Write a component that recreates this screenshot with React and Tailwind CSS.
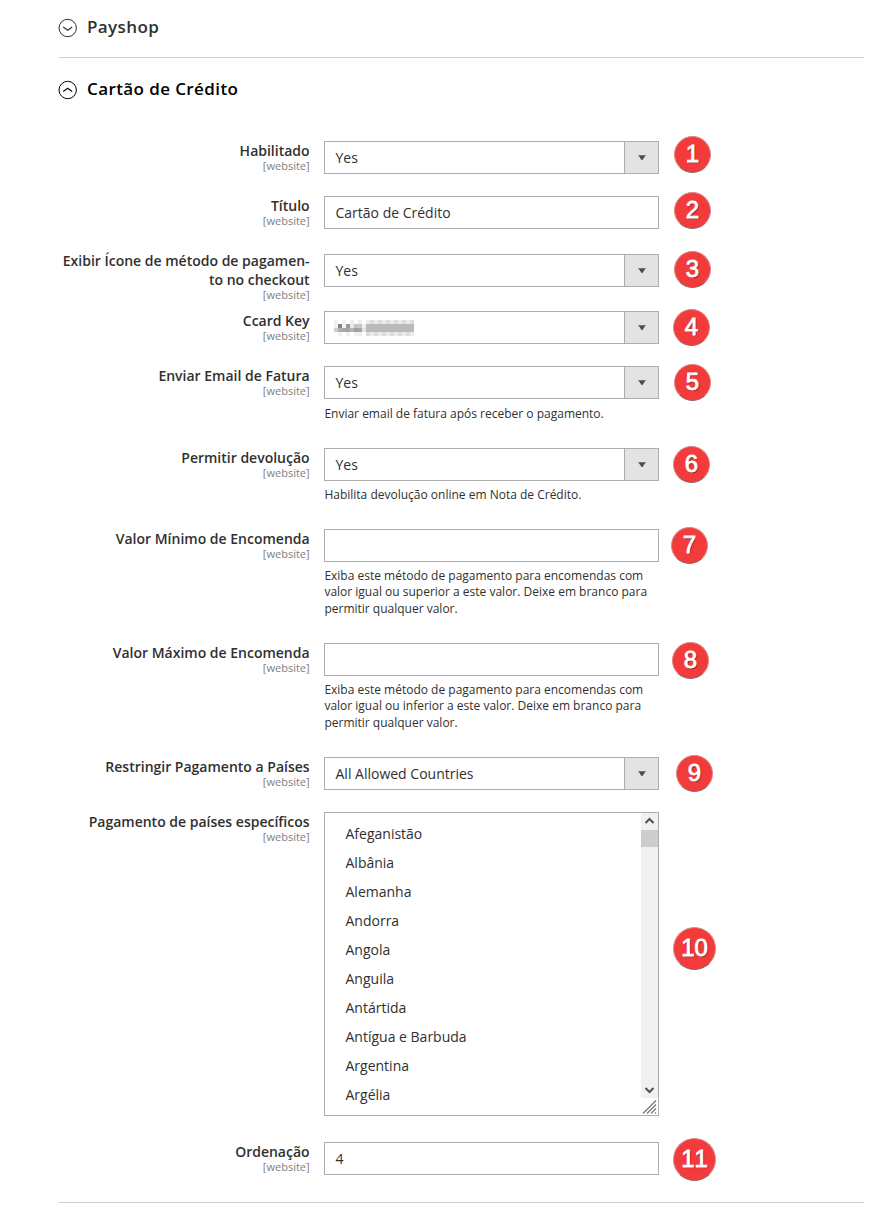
const COUNTRIES = ["Afeganistão", "Albânia", "Alemanha", "Andorra", "Angola", "Anguila", "Antártida", "Antígua e Barbuda", "Argentina", "Argélia"];

const MASK = [
  ["#f5efe8", "#fff", "#f0f0f0", "#fff", "#f5ede4", "#fff", "#e8f0f4", "#fff"],
  ["#f5f2ec", "#838387", "#f4f4f6", "#ab9584", "#e4eaf0", "#c9c4b8", "#c3c9d0", "#f1f1f4"],
  ["#d8ccc2", "#b0adab", "#a5a5a5", "#9da9b1", "#b5b5b5", "#9ba0a6", "#a7a7a7", "#e4e4e8"],
  ["#fff", "#f1f1f1", "#fff", "#f0f0f4", "#fff", "#f1f1f1", "#f0f0f0", "#fff"],
];

function maskColor(row, col) {
  if (col < 8) return MASK[row][col];
  if (row === 1 || row === 2) return "#bababa";
  return (col + (row === 3 ? 1 : 0)) % 2 ? "#dadde6" : "#efede8";
}

function MaskedValue() {
  return (
    <div className="-ml-[1.5px] grid grid-cols-[repeat(20,4px)] grid-rows-[repeat(4,4px)]">
      {[0, 1, 2, 3].map((r) =>
        Array.from({ length: 20 }, (_, c) => <span key={`${r}-${c}`} style={{ backgroundColor: maskColor(r, c) }} />)
      )}
    </div>
  );
}

function Field({ children, select }) {
  return (
    <div className="flex h-[33px] w-[335px] border border-[#adadad] bg-white text-sm text-[#303030]">
      <div className="flex flex-1 items-center pl-[10.5px]">{children}</div>
      {select && (
        <div className="flex w-[34px] items-center justify-center border-l border-[#adadad] bg-[#e3e3e3]">
          <svg width="8" height="5" viewBox="0 0 8 5">
            <path d="M0 0h8v1H0z" fill="#a5a29f" />
            <path d="M.500 .500h7L4.500 5h-1z" fill="#514943" />
          </svg>
        </div>
      )}
    </div>
  );
}

function CountryList() {
  return (
    <div className="flex h-[304px] w-[335px] border border-[#adadad] bg-white text-sm text-[#303030]">
      <ul className="flex-1 pt-[6px] pl-[20.5px]">
        {COUNTRIES.map((c) => <li key={c} className="flex h-[29px] items-center">{c}</li>)}
      </ul>
      <div className="flex w-[17px] flex-col">
        <div className="flex flex-1 flex-col items-center bg-[#f0f0f0]">
          <svg width="17" height="17" viewBox="0 0 17 17"><path d="M4.500 10 8.500 6l4 4" fill="none" stroke="#505050" strokeWidth="2" /></svg>
          <div className="h-[17px] w-full bg-[#cdcdcd]" />
          <div className="flex-1" />
          <svg width="17" height="17" viewBox="0 0 17 17"><path d="M4.500 7l4 4 4-4" fill="none" stroke="#505050" strokeWidth="2" /></svg>
        </div>
        <svg width="17" height="17" viewBox="0 0 17 17"><path d="M2 15.500 15 2.500M6 15.500l9-9M10 15.500l5-5M14 15.500l1-1" stroke="#777" strokeWidth="1.200" /></svg>
      </div>
    </div>
  );
}

function Badge({ n, place }) {
  return (
    <span className={`${place} ${n > 9 ? "size-[43px]" : "size-[37px]"} flex shrink-0 items-center justify-center rounded-full border border-[#d98a8a] border-b-[#8a6a6a] bg-[#f43b3b] pb-0.5 font-['Liberation_Sans',sans-serif] text-2xl leading-none text-white [-webkit-text-stroke:0.8px_white] [font-kerning:none] [text-shadow:1px_1px_1px_#00000080]`}>
      {n}
    </span>
  );
}

function Row({ n, label, height, place, drop, note, noteGap = "mt-[6px]", children }) {
  return (
    <div className={`flex items-start ${height}`}>
      <div className="w-[251px] shrink-0 pr-[0.4px] text-right">
        <div className="text-sm leading-[19px] font-semibold whitespace-nowrap text-[#303030]">{label}</div>
        <div className="text-[11px] leading-[11px] text-[#808080]">[website]</div>
      </div>
      <div className={`ml-3.5 shrink-0 ${drop || ""}`}>
        {children}
        {note && <p className={`${noteGap} pl-[0.4px] text-xs leading-[16.4px] whitespace-pre text-[#303030]`}>{note}</p>}
      </div>
      <Badge n={n} place={place} />
    </div>
  );
}

function Header({ title, open }) {
  return (
    <div className={`flex items-center gap-2.5 text-[17px] leading-6 font-semibold tracking-[0.4px] ${open ? "text-black" : "text-[#303030]"}`}>
      <svg width="18" height="18" viewBox="0 0 18 18" fill="none" stroke="currentColor" className="mt-0.5 overflow-visible">
        <circle cx="8.700" cy="9" r="8.700" />
        <path d={open ? "M4.200 10.500 8.700 7.200l4.500 3.300" : "M4.200 8 8.700 11.300 13.200 8"} strokeWidth="1.100" />
      </svg>
      <h2>{title}</h2>
    </div>
  );
}

export default function App() {
  return (
    <main className="h-[1211px] w-[896px] overflow-hidden bg-white pl-[59px] font-['Open_Sans',sans-serif]">
      <section className="h-[58px] w-[805px] border-b border-[#ccc] pt-[15px]">
        <Header title="Payshop" />
      </section>
      <section className="h-[1145px] w-[805px] border-b border-[#ccc] pt-[19px]">
        <Header title="Cartão de Crédito" open />
        <div className="mt-10">
          <Row n={1} label="Habilitado" height="h-[55px]" place="ml-[15px] -mt-[5px]"><Field select>Yes</Field></Row>
          <Row n={2} label="Título" height="h-[55px]" place="ml-[15px] -mt-[4px]"><Field>Cartão de Crédito</Field></Row>
          <Row n={3} label={<>Exibir Ícone de método de pagamen-<br />to no checkout</>} height="h-[60px]" drop="mt-[3px]" place="ml-[15px]"><Field select>Yes</Field></Row>
          <Row n={4} label="Ccard Key" height="h-[55px]" place="ml-[14px] -mt-[2px]"><Field select><MaskedValue /></Field></Row>
          <Row n={5} label="Enviar Email de Fatura" height="h-[82px]" place="ml-[15px] -mt-[2px]" noteGap="mt-[6.5px]" note="Enviar email de fatura após receber o pagamento."><Field select>Yes</Field></Row>
          <Row n={6} label="Permitir devolução" height="h-[81px]" place="ml-[14px] -mt-[2px]" noteGap="mt-[5.5px]" note="Habilita devolução online em Nota de Crédito."><Field select>Yes</Field></Row>
          <Row n={7} label="Valor Mínimo de Encomenda" height="h-[114px]" place="ml-[12px] -mt-[2px]" note={"Exiba este método de pagamento para encomendas com\nvalor igual ou superior a este valor. Deixe em branco para\npermitir qualquer valor."}><Field /></Row>
          <Row n={8} label="Valor Máximo de Encomenda" height="h-[114px]" place="ml-[13px] -mt-[1px]" note={"Exiba este método de pagamento para encomendas com\nvalor igual ou inferior a este valor. Deixe em branco para\npermitir qualquer valor."}><Field /></Row>
          <Row n={9} label="Restringir Pagamento a Países" height="h-[55px]" place="ml-[17px] -mt-[2px]"><Field select>All Allowed Countries</Field></Row>
          <Row n={10} label="Pagamento de países específicos" height="h-[330px]" place="ml-[14px] mt-[115px]"><CountryList /></Row>
          <Row n={11} label="Ordenação" height="h-[55px]" place="ml-[14px] -mt-[4px]"><Field>4</Field></Row>
        </div>
      </section>
    </main>
  );
}
